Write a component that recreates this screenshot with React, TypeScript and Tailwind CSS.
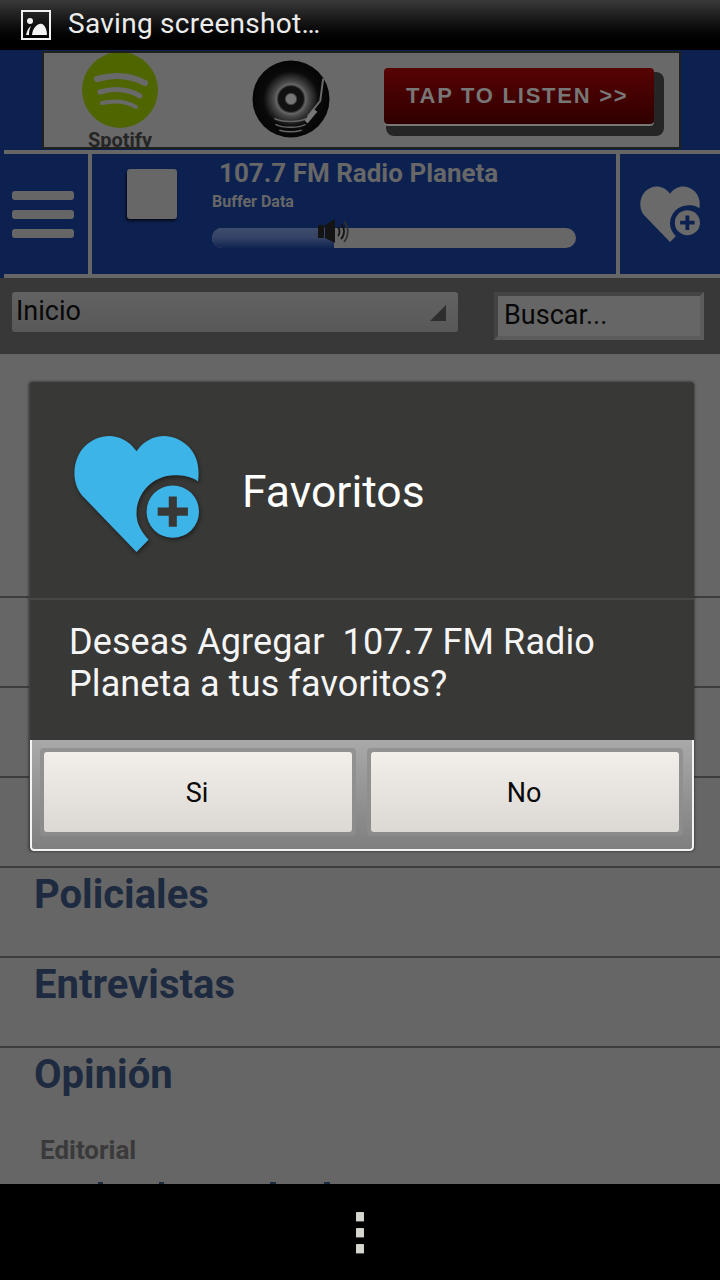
const font = { fontFamily: "Roboto, sans-serif" };

const blankRows = [0, 1, 2];
const menuItems = ["Policiales", "Entrevistas"];
// tops of the next line of the page, all that shows above the bottom bar
const clippedTops = [
  { id: 1, className: "w-[5px] ml-[98px]" },
  { id: 2, className: "w-[5px] ml-[56px]" },
  { id: 3, className: "w-[6px] ml-[106px]" },
  { id: 4, className: "w-[6px] ml-[48px]" },
];

const HeartPlus = ({ fill, cut, className }: { fill: string; cut: string; className: string }) => (
  <svg viewBox="0 0 124 116" className={className}>
    {/* heart with a bite taken out for the round plus badge */}
    <path
      d="M62 116 L8 60 C-3 47 -2 24 11 11 C26 -3 48 -3 62 16 C76 -3 98 -3 113 11 C122 20 125 32 123 46 C116 41 108 40 100 40 C78 40 62 58 62 78 C62 87 66 95 74 104 Z"
      fill={fill}
    />
    <circle cx="98" cy="76" r="26" fill={fill} />
    <path d="M94 61 H102 V72 H113 V80 H102 V91 H94 V80 H83 V72 H94 Z" fill={cut} />
  </svg>
);

const SpotifyLogo = () => (
  <svg viewBox="0 0 76 76" className="w-[76px] h-[76px]">
    <circle cx="38" cy="38" r="38" fill="#4f6500" />
    <g fill="none" stroke="#696969" strokeLinecap="round">
      <path d="M15 27 C32 22 48 23 63 31" strokeWidth="6" />
      <path d="M18 40 C32 36 46 37 58 44" strokeWidth="5" />
      <path d="M20 51 C33 48 44 49 54 55" strokeWidth="4" />
    </g>
  </svg>
);

const Vinyl = () => (
  <svg viewBox="0 0 80 80" className="w-[78px] h-[78px]">
    <defs>
      <radialGradient id="disc">
        <stop offset="0%" stopColor="#777" />
        <stop offset="12%" stopColor="#777" />
        <stop offset="17%" stopColor="#111" />
        <stop offset="32%" stopColor="#111" />
        <stop offset="38%" stopColor="#666" />
        <stop offset="45%" stopColor="#4a4a4a" />
        <stop offset="72%" stopColor="#0a0a0a" />
        <stop offset="100%" stopColor="#050505" />
      </radialGradient>
    </defs>
    <circle cx="40" cy="40" r="39.5" fill="url(#disc)" />
    <g fill="none" stroke="#666" strokeWidth="1.6">
      <path d="M23 60 C31 64 48 64 56 60" />
      <path d="M24 66 C32 70 47 70 55 66" />
      <path d="M28 72 C35 74 44 74 51 72" />
    </g>
    <path d="M73 19 L70 42 L57 58" fill="none" stroke="#6a6a6a" strokeWidth="2" />
    <path d="M63 50 L54 62 L57 65 L67 53 Z" fill="#777" />
  </svg>
);

const Speaker = () => (
  <svg viewBox="0 0 32 26" className="w-[32px] h-[26px]">
    <path d="M1 7 H7 V20 H1 Z M8 7 L18 1 V25 L8 20 Z" fill="#141414" />
    <g fill="none" stroke="#141414" strokeWidth="1.8">
      <path d="M21 9 C23 11 23 16 21 18" />
      <path d="M24 6 C28 10 28 17 24 21" />
      <path d="M27 3 C32 9 32 18 27 24" stroke="#303030" />
    </g>
  </svg>
);

export default function App() {
  return (
    <div className="w-[720px] h-[1280px] overflow-hidden flex flex-col bg-black" style={font}>
      {/* status bar */}
      <div className="h-[50px] shrink-0 bg-gradient-to-b from-[#3a3a3a] to-black flex items-center pl-[21px] gap-[17px]">
        <svg viewBox="0 0 30 30" className="w-[30px] h-[30px]">
          <rect x="1" y="1" width="28" height="28" fill="none" stroke="#f2f2f2" strokeWidth="2" />
          <circle cx="9" cy="11" r="3" fill="#f2f2f2" />
          <path d="M5 25 C6 20 8 17 10 16 C8 20 8 23 8 25 Z M11 25 C12 17 17 13 21 14 C24 15 26 20 26 25 Z" fill="#f2f2f2" />
        </svg>
        <span className="text-[28px] text-[#ececec] leading-none mb-[2px] tracking-[0.28px]">Saving screenshot…</span>
      </div>

      {/* ad banner */}
      <div className="h-[100px] shrink-0 bg-[#0d2150] pl-[42px] py-px">
        <div className="w-[639px] h-full overflow-hidden bg-[#696969] border-2 border-[#202020] flex items-start">
          <div className="flex flex-col items-center ml-[38px] -mt-[1px]">
            <SpotifyLogo />
            <span className="text-[20px] font-bold text-[#252525] leading-none mt-[2px]">Spotify</span>
          </div>
          <div className="ml-[94px] mt-[7px]">
            <Vinyl />
          </div>
          <div className="ml-[54px] mt-[15px] w-[270px] h-[56px] rounded-[4px] bg-gradient-to-b from-[#570303] to-[#300000] flex items-center pl-[22px] shadow-[0_2px_0_#777,6px_8px_0_4px_#252525]">
            <span className="text-[22px] font-bold tracking-[1.75px] text-[#777] leading-none" style={{ fontFamily: "'Liberation Sans', sans-serif" }}>
              TAP TO LISTEN &gt;&gt;
            </span>
          </div>
        </div>
      </div>

      {/* player */}
      <div className="h-[4px] shrink-0 bg-[#0d2150] pl-[4px]">
        <div className="h-full bg-[#666]" />
      </div>
      <div className="h-[120px] shrink-0 bg-[#0d2150] flex">
        <div className="w-[88px] flex flex-col items-start justify-center gap-[10px] pl-[12px]">
          <span className="w-[62px] h-[9px] rounded-[3px] bg-[#666]" />
          <span className="w-[62px] h-[9px] rounded-[3px] bg-[#666]" />
          <span className="w-[62px] h-[9px] rounded-[3px] bg-[#666]" />
        </div>
        <div className="w-[4px] bg-[#666]" />
        <div className="w-[120px] shrink-0 pl-[35px] pt-[15px]">
          <div className="w-[50px] h-[50px] rounded-[3px] bg-[#676767] shadow-[-1px_2px_3px_#050a18]" />
        </div>
        <div className="w-[404px] flex flex-col">
          <div className="text-[26px] font-bold text-[#676767] leading-none mt-[6px] ml-[7px]">107.7 FM Radio Planeta</div>
          <div className="text-[16px] font-bold text-[#676767] leading-none mt-[8px]">Buffer Data</div>
          <div className="relative mt-[18px] w-[364px] h-[20px] rounded-full bg-[#676767]">
            <div className="w-[122px] h-[20px] rounded-l-full bg-gradient-to-b from-[#3e4c6c] via-[#334265] to-[#0f2352]" />
            <div className="absolute left-[105px] top-[-10px]">
              <Speaker />
            </div>
          </div>
        </div>
        <div className="w-[4px] bg-[#666]" />
        <div className="flex-1 flex items-center justify-center">
          <HeartPlus fill="#6a6a6a" cut="#0d2150" className="w-[60px] h-[56px]" />
        </div>
      </div>
      <div className="h-[4px] shrink-0 bg-[#0d2150] pl-[4px]">
        <div className="h-full bg-[#666]" />
      </div>

      {/* filter row */}
      <div className="h-[76px] shrink-0 bg-[#383838] flex items-start pl-[12px]">
        <div className="w-[446px] h-[40px] mt-[14px] rounded-[3px] bg-gradient-to-b from-[#626262] to-[#585858] flex items-center justify-between pl-[4px] pr-[12px]">
          <span className="text-[27px] text-[#080808] leading-none mb-[1px]">Inicio</span>
          <span className="w-0 h-0 border-l-[16px] border-l-transparent border-b-[16px] border-b-[#2e2e2e] mt-[2px]" />
        </div>
        <div className="ml-[36px] mt-[14px] w-[210px] h-[48px] bg-[#666] border-[4px] border-t-[#444] border-l-[#444] border-r-[#5c5c5c] border-b-[#5c5c5c] flex items-center pl-[6px]">
          <span className="text-[27px] text-[#080808] leading-none mb-[2px]">Buscar...</span>
        </div>
      </div>

      {/* page behind the dialog */}
      <div className="relative flex-1 bg-[#666] overflow-hidden">
        <div className="h-[244px] border-b-2 border-[#3d3d3d]" />
        {blankRows.map((row) => (
          <div key={row} className="h-[90px] border-b-2 border-[#3d3d3d]" />
        ))}
        {menuItems.map((item) => (
          <div key={item} className="h-[90px] border-b-2 border-[#3d3d3d] pt-[7px]">
            <div className="text-[40px] font-bold text-[#1e2a40] leading-none pl-[34px]">{item}</div>
          </div>
        ))}
        <div className="h-[89px] pt-[7px]">
          <div className="text-[40px] font-bold text-[#1e2a40] leading-none pl-[34px]">Opinión</div>
        </div>
        <div className="text-[26px] font-bold text-[#3a3a3a] leading-none pl-[40px]">Editorial</div>

        <div className="absolute bottom-0 left-0 flex">
          {clippedTops.map((top) => (
            <span key={top.id} className={`h-[2px] bg-[#1e2a40] ${top.className}`} />
          ))}
        </div>

        {/* dialog */}
        <div className="absolute left-[29px] top-[28px] w-[665px] h-[469px] rounded-[4px] overflow-hidden flex flex-col bg-[#383836] border-l border-[#444] shadow-[0_0_3px_#222]">
          <div className="h-[218px] shrink-0 flex items-center border-b-2 border-[#474745] pl-[44px] pt-[4px]">
            <HeartPlus fill="#3db4e8" cut="#383836" className="w-[125px] h-[117px] mt-[3px] drop-shadow-[1px_2px_2px_rgba(0,0,0,0.45)]" />
            <span className="text-[44.5px] text-white leading-none ml-[43px] mt-[1px]">Favoritos</span>
          </div>
          <div className="flex-1 text-[36px] leading-[42px] text-[#f5f5f5] pl-[39px] pt-[21px] whitespace-pre tracking-[0.1px]">
            {"Deseas Agregar  107.7 FM Radio\nPlaneta a tus favoritos?"}
          </div>
          <div className="h-[111px] shrink-0 bg-gradient-to-b from-[#a9a9a9] to-[#7f7f7f] border-l-2 border-r-2 border-b-2 border-[#f4f4f4] rounded-b-[4px] flex gap-[11px] pl-[8px] pt-[8px]">
            {["Si", "No"].map((label) => (
              <div key={label} className="w-[316px] h-[88px] p-[4px] rounded-[4px] bg-[#8d8d8d]/80">
                <div className="h-full rounded-[3px] bg-gradient-to-b from-[#f2efeb] to-[#dcd9d5] flex items-center justify-center text-[27px] text-[#0a0a0a] leading-none pt-[2px] pr-[2px]">
                  {label}
                </div>
              </div>
            ))}
          </div>
        </div>
      </div>

      {/* bottom bar */}
      <div className="h-[96px] shrink-0 bg-black flex flex-col items-center gap-[6px] pt-[28px]">
        <span className="w-[8px] h-[10px] rounded-[1px] bg-[#d6d6d0] border-b border-[#555]" />
        <span className="w-[8px] h-[10px] rounded-[1px] bg-[#d6d6d0] border-b border-[#555]" />
        <span className="w-[8px] h-[10px] rounded-[1px] bg-[#d6d6d0] border-b border-[#555]" />
      </div>
    </div>
  );
}
